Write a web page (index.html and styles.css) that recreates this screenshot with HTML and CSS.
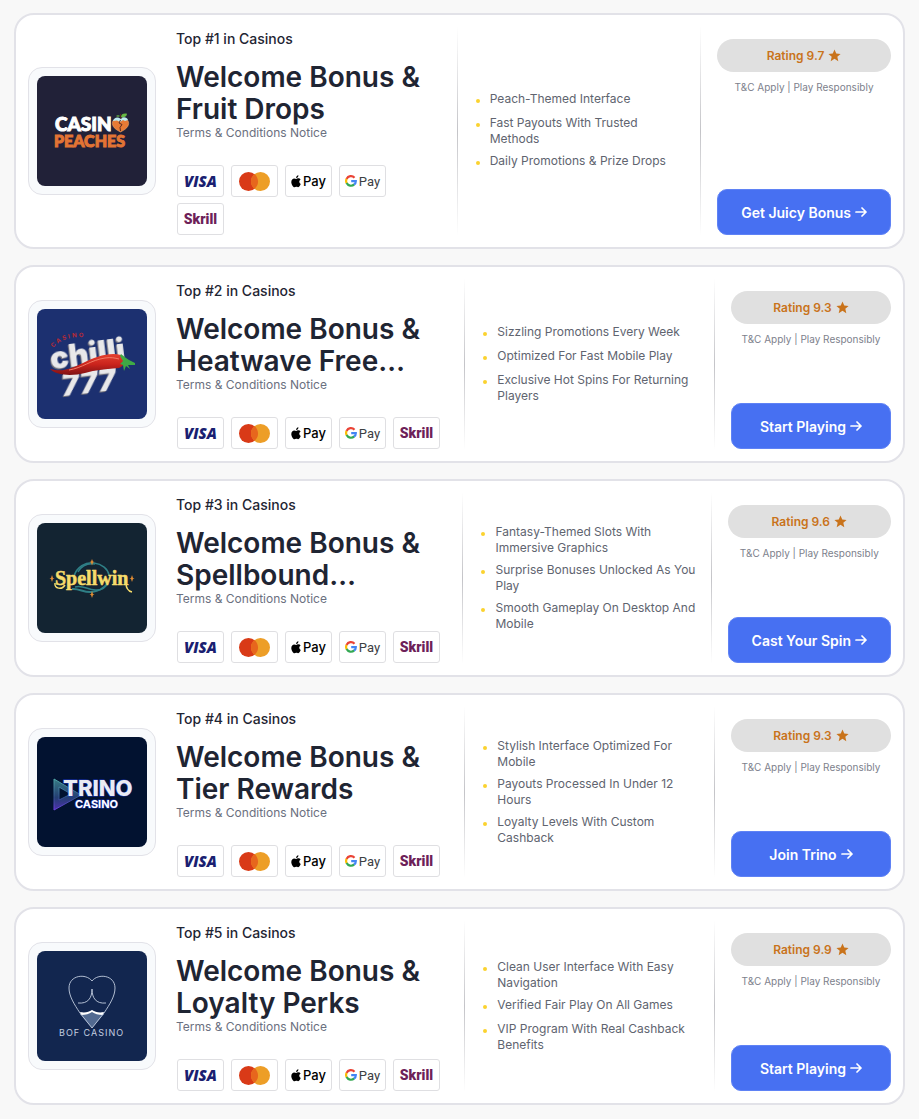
FILE: index.html
```html
<!DOCTYPE html>
<html lang="en">
<head>
    <meta charset="UTF-8">
    <meta name="viewport" content="width=device-width, initial-scale=1.0">
    <title>Top Casinos</title>
    <link rel="stylesheet" href="styles.css">
</head>
<body>
    <!-- Shared icons -->
    <svg class="sprite" aria-hidden="true">
        <symbol id="mastercard" viewBox="0 0 31 19">
            <circle cx="9.5" cy="9.5" r="9.5" fill="#d93a17"/>
            <circle cx="21.5" cy="9.5" r="9.5" fill="#ed9e27"/>
            <path fill="#e7661d" d="M15.500 2.100a9.500 9.500 0 0 1 0 14.800a9.500 9.500 0 0 1 0-14.800z"/>
        </symbol>
        <symbol id="apple" viewBox="0 0 10 13">
            <path d="M9.700 8.900c-.6 1.700-1.700 3.300-2.700 3.300-.7 0-1-.4-1.800-.4s-1.200.4-1.800.4C2.100 12.200.3 9.300.3 6.900c0-2.300 1.500-3.500 2.900-3.500.8 0 1.500.5 2 .5s1.300-.6 2.300-.6c.9 0 1.600.4 2.100 1.100-1.900 1.100-1.700 3.700.1 4.500zM5.100 3.100C5 1.600 6.100.4 7.400.2c.2 1.500-1 2.800-2.300 2.900z"/>
        </symbol>
        <symbol id="google" viewBox="0 0 12 12">
            <g fill="none" stroke-width="2.200">
                <path stroke="#fbbc04" d="M1.700 3.700a4.800 4.800 0 0 0 0 4.600"/>
                <path stroke="#ea4335" d="M1.600 3.900A4.800 4.800 0 0 1 9.500 2.700"/>
                <path stroke="#34a853" d="M1.600 8.100a4.800 4.800 0 0 0 7.600 1.300"/>
                <path stroke="#4285f4" d="M6.200 6.200h4.600c0 1.400-.6 2.600-1.700 3.400"/>
            </g>
        </symbol>
        <symbol id="star" viewBox="0 0 24 24">
            <path d="M12 1l3.200 7.400 8 .8-6 5.300 1.800 7.900-7-4.200-7 4.200 1.800-7.900-6-5.300 8-.8z"/>
        </symbol>
        <symbol id="arrow" viewBox="0 0 12 12">
            <path fill="none" stroke="currentColor" stroke-width="1.700" stroke-linecap="round" stroke-linejoin="round" d="M1 6h10M7 2l4 4-4 4"/>
        </symbol>
    </svg>

    <main class="casino-list">
        <article class="casino-card">
            <div class="logo-frame">
                <svg class="logo logo-peaches" viewBox="0 0 110 110" role="img" aria-label="Casino Peaches">
                    <text class="peach-text" x="18" y="55">CASIN</text>
                    <text class="peach-text peach-bottom" x="17" y="71">PEACHES</text>
                    <path fill="#e87b35" stroke="#f6b16e" stroke-width=".5" d="M83.500 56c-5-2.500-9-5.500-8-10 .7-3.300 5-4 8-1.500 3-2.500 7.300-1.800 8 1.500 1 4.500-3 7.500-8 10z"/>
                    <path fill="#bdeaf0" d="M76 45c1-4 5-4.500 7.500-2.300 2.500-2.200 6.500-1.700 7.500 1.300l-3 1-2-1-3 2-3-1.500z"/>
                    <path fill="none" stroke="#5c2b20" d="M83.500 44l-1.500 3 3 1.500-2 3 .5 3.500M84 43l-.5-5"/>
                    <path fill="#68b843" d="M84 41c0-3 3-4 6-3.200 0 3-3 4-6 3.200zM83 40c-1-1-3-1-4 0 1 1 3 1 4 0z"/>
                </svg>
            </div>
            <div class="info">
                <p class="rank">Top #1 in Casinos</p>
                <h2 class="title">Welcome Bonus &amp; Fruit Drops</h2>
                <p class="terms">Terms &amp; Conditions Notice</p>
                <div class="payments">
                    <span class="pay visa">VISA</span>
                    <span class="pay"><svg class="mastercard"><use href="#mastercard"/></svg></span>
                    <span class="pay apple-pay"><svg class="apple"><use href="#apple"/></svg>Pay</span>
                    <span class="pay google-pay"><svg class="google"><use href="#google"/></svg>Pay</span>
                    <span class="pay skrill">Skrill</span>
                </div>
            </div>
            <ul class="features">
                <li>Peach-Themed Interface</li>
                <li>Fast Payouts With Trusted Methods</li>
                <li>Daily Promotions &amp; Prize Drops</li>
            </ul>
            <div class="action">
                <div class="rating">Rating 9.7 <svg class="star"><use href="#star"/></svg></div>
                <p class="notice">T&amp;C Apply | Play Responsibly</p>
                <a class="cta" href="#">Get Juicy Bonus <svg class="arrow"><use href="#arrow"/></svg></a>
            </div>
        </article>

        <article class="casino-card">
            <div class="logo-frame">
                <svg class="logo logo-chilli" viewBox="0 0 110 110" role="img" aria-label="Casino Chilli 777">
                    <defs>
                        <linearGradient id="chilli-red" x1="0" y1="0" x2="0" y2="1">
                            <stop offset="0" stop-color="#e5402f"/>
                            <stop offset=".5" stop-color="#c9231c"/>
                            <stop offset="1" stop-color="#7e1114"/>
                        </linearGradient>
                        <path id="casino-arc" d="M16 39q12-14 38-10"/>
                    </defs>
                    <text class="chilli-casino"><textPath href="#casino-arc">CASINO</textPath></text>
                    <g transform="rotate(-7 50 55)">
                        <text class="chilli-text" x="14" y="56">chilli</text>
                        <text class="chilli-text chilli-777" x="22" y="84">777</text>
                    </g>
                    <path fill="url(#chilli-red)" d="M13 60C28 64 36 58 46 54 58 48 72 43 84 46 89 51 88 57 82 59 70 60 58 61 48 64 36 67 20 67 13 60z"/>
                    <path fill="none" stroke="#f37a64" d="M32 61c13-2 22-10 36-12 6-1 10 0 14 1"/>
                    <path fill="#3faa45" d="M84 45l5 4 3 2 6 3v2h-7l2 4-4-3-2 5-1-6-3-1 3-3-3-5z"/>
                </svg>
            </div>
            <div class="info">
                <p class="rank">Top #2 in Casinos</p>
                <h2 class="title">Welcome Bonus &amp; Heatwave Free…</h2>
                <p class="terms">Terms &amp; Conditions Notice</p>
                <div class="payments">
                    <span class="pay visa">VISA</span>
                    <span class="pay"><svg class="mastercard"><use href="#mastercard"/></svg></span>
                    <span class="pay apple-pay"><svg class="apple"><use href="#apple"/></svg>Pay</span>
                    <span class="pay google-pay"><svg class="google"><use href="#google"/></svg>Pay</span>
                    <span class="pay skrill">Skrill</span>
                </div>
            </div>
            <ul class="features">
                <li>Sizzling Promotions Every Week</li>
                <li>Optimized For Fast Mobile Play</li>
                <li>Exclusive Hot Spins For Returning Players</li>
            </ul>
            <div class="action">
                <div class="rating">Rating 9.3 <svg class="star"><use href="#star"/></svg></div>
                <p class="notice">T&amp;C Apply | Play Responsibly</p>
                <a class="cta" href="#">Start Playing <svg class="arrow"><use href="#arrow"/></svg></a>
            </div>
        </article>

        <article class="casino-card">
            <div class="logo-frame">
                <svg class="logo logo-spellwin" viewBox="0 0 110 110" role="img" aria-label="Spellwin">
                    <g fill="none" stroke="#2f7f86" stroke-width="1.500">
                        <path d="M37 53c3-9 11-14 20-13 8 1 14 6 15 12"/>
                        <path d="M41 49c4-7 10-9 17-8M38 64c8-3 13 4 22 3 5 0 9-3 11-7"/>
                        <path stroke-width="2" d="M35 66c7-1 12 4 20 3 7-1 12-4 15-8"/>
                    </g>
                    <text class="spell-text" x="18" y="62">Spellwin</text>
                    <path fill="none" stroke="#f6dc6b" stroke-width="1.500" d="M18 60c-1 6 7 7 10 2M89 60c0 5 2 8 6 9"/>
                    <path fill="#e28c32" d="M55 36l1 2.500 1.500.5-1.500.5-1 3-1-3-1.500-.5 1.500-.5zM55 68l1 3 1.500.5-1.500.5-1 3-1-3-1.500-.5 1.500-.5zM15 52l1 3 1.500.5-1.500.5-1 3-1-3-1.500-.5 1.500-.5zM95 52l1 3 1.500.5-1.500.5-1 3-1-3-1.500-.5 1.500-.5z"/>
                </svg>
            </div>
            <div class="info">
                <p class="rank">Top #3 in Casinos</p>
                <h2 class="title">Welcome Bonus &amp; Spellbound…</h2>
                <p class="terms">Terms &amp; Conditions Notice</p>
                <div class="payments">
                    <span class="pay visa">VISA</span>
                    <span class="pay"><svg class="mastercard"><use href="#mastercard"/></svg></span>
                    <span class="pay apple-pay"><svg class="apple"><use href="#apple"/></svg>Pay</span>
                    <span class="pay google-pay"><svg class="google"><use href="#google"/></svg>Pay</span>
                    <span class="pay skrill">Skrill</span>
                </div>
            </div>
            <ul class="features">
                <li>Fantasy-Themed Slots With Immersive Graphics</li>
                <li>Surprise Bonuses Unlocked As You Play</li>
                <li>Smooth Gameplay On Desktop And Mobile</li>
            </ul>
            <div class="action">
                <div class="rating">Rating 9.6 <svg class="star"><use href="#star"/></svg></div>
                <p class="notice">T&amp;C Apply | Play Responsibly</p>
                <a class="cta" href="#">Cast Your Spin <svg class="arrow"><use href="#arrow"/></svg></a>
            </div>
        </article>

        <article class="casino-card">
            <div class="logo-frame">
                <svg class="logo logo-trino" viewBox="0 0 110 110" role="img" aria-label="Trino Casino">
                    <defs>
                        <linearGradient id="trino-play" x1="0" y1="0" x2="0" y2="1">
                            <stop offset="0" stop-color="#4fa7a8"/>
                            <stop offset=".6" stop-color="#33518f"/>
                            <stop offset="1" stop-color="#6c3fe0"/>
                        </linearGradient>
                    </defs>
                    <path fill="url(#trino-play)" fill-opacity=".7" fill-rule="evenodd" stroke="url(#trino-play)" d="M17 42l27 16-27 15zM22 50v13l12-6z"/>
                    <text class="trino-text" x="26" y="59">TRINO</text>
                    <text class="trino-sub" x="38" y="71">CASINO</text>
                </svg>
            </div>
            <div class="info">
                <p class="rank">Top #4 in Casinos</p>
                <h2 class="title">Welcome Bonus &amp; Tier Rewards</h2>
                <p class="terms">Terms &amp; Conditions Notice</p>
                <div class="payments">
                    <span class="pay visa">VISA</span>
                    <span class="pay"><svg class="mastercard"><use href="#mastercard"/></svg></span>
                    <span class="pay apple-pay"><svg class="apple"><use href="#apple"/></svg>Pay</span>
                    <span class="pay google-pay"><svg class="google"><use href="#google"/></svg>Pay</span>
                    <span class="pay skrill">Skrill</span>
                </div>
            </div>
            <ul class="features">
                <li>Stylish Interface Optimized For Mobile</li>
                <li>Payouts Processed In Under 12 Hours</li>
                <li>Loyalty Levels With Custom Cashback</li>
            </ul>
            <div class="action">
                <div class="rating">Rating 9.3 <svg class="star"><use href="#star"/></svg></div>
                <p class="notice">T&amp;C Apply | Play Responsibly</p>
                <a class="cta" href="#">Join Trino <svg class="arrow"><use href="#arrow"/></svg></a>
            </div>
        </article>

        <article class="casino-card">
            <div class="logo-frame">
                <svg class="logo logo-bof" viewBox="0 0 110 110" role="img" aria-label="Bof Casino">
                    <path fill="#526a91" d="M43 63c5 0 8-2 12-4 4 2 7 4 12 4L55 77z"/>
                    <path fill="#fff" d="M43 61c5 1 9 0 12-2 3 2 7 3 12 2l-1 3c-5 0-8-1-11-3-3 2-6 3-11 3z"/>
                    <g fill="none" stroke="#c3cee0" stroke-width=".9">
                        <path d="M55 77L43 62C37 53 32 45 32 37c0-13 17-15 23-7 6-8 23-6 23 7 0 8-5 16-11 25z"/>
                        <path d="M55 38c0 9-4 15-14 14M55 38c0 9 4 15 14 14"/>
                    </g>
                    <text class="bof-text" x="22" y="85">BOF CASINO</text>
                </svg>
            </div>
            <div class="info">
                <p class="rank">Top #5 in Casinos</p>
                <h2 class="title">Welcome Bonus &amp; Loyalty Perks</h2>
                <p class="terms">Terms &amp; Conditions Notice</p>
                <div class="payments">
                    <span class="pay visa">VISA</span>
                    <span class="pay"><svg class="mastercard"><use href="#mastercard"/></svg></span>
                    <span class="pay apple-pay"><svg class="apple"><use href="#apple"/></svg>Pay</span>
                    <span class="pay google-pay"><svg class="google"><use href="#google"/></svg>Pay</span>
                    <span class="pay skrill">Skrill</span>
                </div>
            </div>
            <ul class="features">
                <li>Clean User Interface With Easy Navigation</li>
                <li>Verified Fair Play On All Games</li>
                <li>VIP Program With Real Cashback Benefits</li>
            </ul>
            <div class="action">
                <div class="rating">Rating 9.9 <svg class="star"><use href="#star"/></svg></div>
                <p class="notice">T&amp;C Apply | Play Responsibly</p>
                <a class="cta" href="#">Start Playing <svg class="arrow"><use href="#arrow"/></svg></a>
            </div>
        </article>
    </main>
</body>
</html>
```
FILE: styles.css
```css
* {
    margin: 0;
    padding: 0;
    box-sizing: border-box;
}

body {
    background-color: #f8f8f8;
    font-family: 'Inter', sans-serif;
    color: #1f2533;
}

.sprite {
    position: absolute;
    width: 0;
    height: 0;
}

.casino-list {
    display: flex;
    flex-direction: column;
    gap: 16px;
    padding: 13px 14px;
}

.casino-card {
    display: grid;
    grid-template-columns: 128px minmax(0, 1.235fr) minmax(0, 1fr) auto;
    padding: 12px;
    background: #fff;
    border: 2px solid #e2e2e8;
    border-radius: 20px;
}

/* Logo */
.logo-frame {
    align-self: center;
    padding: 8px;
    background: #f8fafc;
    border: 1px solid #e2e2e8;
    border-radius: 14px;
}

.logo {
    display: block;
    width: 110px;
    height: 110px;
    border-radius: 8px;
}

.logo-peaches { background: #212138; }
.logo-chilli { background: #1c3070; }
.logo-spellwin { background: #132432; }
.logo-trino { background: #021230; }
.logo-bof { background: #12264f; }

.peach-text {
    font: 900 19px 'Lato', sans-serif;
    fill: #fff;
    stroke: #fff;
    stroke-width: 1;
}

.peach-bottom {
    font-size: 16px;
    fill: #e27434;
    stroke: #e27434;
}

.chilli-casino {
    font: 700 6px 'Inter', sans-serif;
    letter-spacing: 2px;
    fill: #b92a35;
}

.chilli-text {
    font: 900 31px 'Inter', sans-serif;
    fill: #e8e8ea;
    filter: drop-shadow(-1px 1px 0 #77757c);
}

.chilli-777 {
    font-size: 30px;
    font-style: italic;
}

.spell-text {
    font: 700 20px 'Liberation Serif', serif;
    fill: #f6dc6b;
    stroke: #f6dc6b;
    stroke-width: .5;
}

.trino-text {
    font: 800 22px 'Inter', sans-serif;
    fill: #e9ebf2;
    stroke: #1c35b5;
    paint-order: stroke;
}

.trino-sub {
    font: 700 11px 'Inter', sans-serif;
    fill: #fff;
    stroke: #1c35b5;
    paint-order: stroke;
}

.bof-text {
    font: 400 9px 'Inter', sans-serif;
    letter-spacing: 1px;
    fill: #c3cee0;
}

/* Text column */
.info {
    padding: 2px 19px 0 20px;
}

.rank {
    font-size: 14px;
    font-weight: 500;
    line-height: 20px;
}

.title {
    margin-top: 12px;
    font-size: 28px;
    font-weight: 600;
    line-height: 32px;
}

.terms {
    font-size: 12px;
    line-height: 16px;
    color: #6b7080;
}

/* Payment chips */
.payments {
    display: flex;
    flex-wrap: wrap;
    gap: 6px 7px;
    margin-top: 24px;
    padding-left: 1px;
}

.pay {
    display: flex;
    align-items: center;
    justify-content: center;
    gap: 2px;
    width: 47px;
    height: 32px;
    background: #fff;
    border: 1px solid #dfdfe2;
    border-radius: 3px;
}

.visa {
    font: italic 800 15px 'Open Sans', sans-serif;
    color: #1a1f71;
}

.apple-pay {
    font-size: 13px;
    font-weight: 500;
    color: #000;
}

.google-pay {
    font: 400 13px 'Roboto', sans-serif;
    color: #3c4043;
}

.skrill {
    font: 900 14px 'Roboto', sans-serif;
    color: #6d2158;
}

.mastercard {
    width: 31px;
    height: 19px;
}

.apple {
    width: 10px;
    height: 13px;
}

.google {
    width: 12px;
    height: 12px;
}

/* Feature list and column dividers */
.features,
.action {
    border-left: 1px solid;
    border-image: linear-gradient(transparent, #c4c4c8 50%, transparent) 1;
}

.features {
    display: flex;
    flex-direction: column;
    justify-content: center;
    gap: 6px;
    padding: 0 12px 0 18px;
    list-style: none;
}

.features li {
    display: flex;
    gap: 10px;
    min-height: 18px;
    font-size: 12px;
    line-height: 16px;
    color: #60646f;
}

.features li::before {
    content: '';
    flex: none;
    width: 4px;
    height: 4px;
    margin-top: 8px;
    border-radius: 50%;
    background: #fbd22f;
}

/* Rating and button */
.action {
    display: flex;
    flex-direction: column;
    min-width: 177px;
    padding: 12px 0 0 16px;
    text-align: center;
}

.rating {
    display: flex;
    align-items: center;
    justify-content: center;
    gap: 4px;
    height: 33px;
    border-radius: 17px;
    background: #e0e0e0;
    color: #c9731b;
    font-size: 12px;
    font-weight: 600;
}

.star {
    width: 13px;
    height: 13px;
    fill: currentColor;
}

.notice {
    margin-top: 7px;
    font-size: 10px;
    line-height: 16px;
    color: #7d818c;
}

.cta {
    display: flex;
    align-items: center;
    justify-content: center;
    gap: 4px;
    height: 46px;
    margin-top: auto;
    padding: 0 23px;
    border: 1px solid #5f82f5;
    border-radius: 10px;
    background: #4770f2;
    color: #fff;
    font-size: 14px;
    font-weight: 600;
    text-decoration: none;
    white-space: nowrap;
}

.arrow {
    width: 12px;
    height: 12px;
}
```
